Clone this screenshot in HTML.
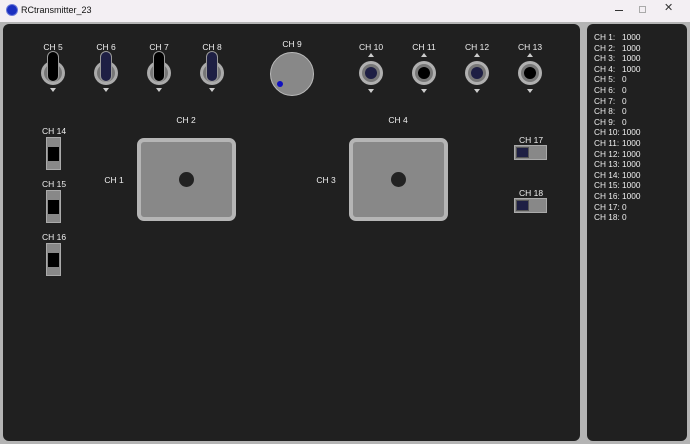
<!DOCTYPE html><html><head><style>
*{margin:0;padding:0;box-sizing:border-box}
body{width:690px;height:444px;background:#b4b4b4;position:relative;overflow:hidden;font-family:"Liberation Sans",sans-serif;color:#eee}
.a{position:absolute}
.t{position:absolute;font-size:8.5px;color:#eee;transform:translateX(-50%);white-space:nowrap}
.ring{position:absolute;border-radius:50%;background:#ababab}
.ring::after{content:"";position:absolute;left:3px;top:3px;right:3px;bottom:3px;border-radius:50%;background:#777}
.lev{position:absolute;width:12px;height:31px;border-radius:6px;border:1px solid #999;z-index:2}
.dn,.up{position:absolute;width:0;height:0;border-left:3px solid transparent;border-right:3px solid transparent;transform:translateX(-50%)}
.dn{border-top:4px solid #ccc}.up{border-bottom:4px solid #ccc}
.jack{position:absolute;width:24px;height:24px;border-radius:50%;background:#b0b0b0}
.jack i{position:absolute;left:3px;top:3px;width:18px;height:18px;border-radius:50%;background:#777}
.jack b{position:absolute;left:6px;top:6px;width:12px;height:12px;border-radius:50%}
.vs{position:absolute;width:15px;height:33px;background:#888;border:1px solid #aaa}
.vs i{position:absolute;left:1px;top:9px;width:11px;height:14px;background:#000}
.hs{position:absolute;width:33px;height:15px;background:#888;border:1px solid #aaa}
.hs i{position:absolute;left:1px;top:1px;width:13px;height:11px;background:#1e1f44;border:1px solid #555}
.pad{position:absolute;width:99px;height:83px;background:#888;border:4px solid #b5b5b5;border-radius:7px}
.pad i{position:absolute;left:38px;top:30px;width:15px;height:15px;border-radius:50%;background:#222}
.list{position:absolute;left:594px;top:32px;font-size:8.3px;line-height:10.6px;color:#eee}
.list span{display:inline-block;width:28px}
</style></head><body>
<div class="a" style="left:0;top:0;width:690px;height:22px;background:#f3eff3"></div>
<div class="a" style="left:6px;top:4px;width:12px;height:12px;border-radius:50%;background:#1a2fc0;border:1px solid #6a78d8"></div>
<div class="a" style="left:21px;top:5px;font-size:9px;color:#111">RCtransmitter_23</div>
<div class="a" style="left:615px;top:10px;width:8px;height:1px;background:#333"></div>
<div class="a" style="left:639px;top:6px;width:7px;height:7px;border:1px solid #aaa"></div>
<div class="a" style="left:664px;top:1px;font-size:11px;color:#333">✕</div>
<div class="a" style="left:3px;top:24px;width:577px;height:417px;background:#202020;border-radius:6px"></div>
<div class="a" style="left:587px;top:24px;width:100px;height:417px;background:#202020;border-radius:6px"></div>

<div class="t" style="left:53px;top:42px">CH 5</div><div class="t" style="left:106px;top:42px">CH 6</div><div class="t" style="left:159px;top:42px">CH 7</div><div class="t" style="left:212px;top:42px">CH 8</div>
<div class="ring" style="left:41px;top:61px;width:24px;height:24px"></div><div class="lev" style="left:47px;top:51px;background:#000"></div><div class="dn" style="left:53px;top:88px"></div>
<div class="ring" style="left:94px;top:61px;width:24px;height:24px"></div><div class="lev" style="left:100px;top:51px;background:#1e1f44"></div><div class="dn" style="left:106px;top:88px"></div>
<div class="ring" style="left:147px;top:61px;width:24px;height:24px"></div><div class="lev" style="left:153px;top:51px;background:#000"></div><div class="dn" style="left:159px;top:88px"></div>
<div class="ring" style="left:200px;top:61px;width:24px;height:24px"></div><div class="lev" style="left:206px;top:51px;background:#1e1f44"></div><div class="dn" style="left:212px;top:88px"></div>

<div class="t" style="left:292px;top:39px">CH 9</div>
<div class="a" style="left:270px;top:52px;width:44px;height:44px;border-radius:50%;background:#888;border:1px solid #bbb"></div>
<div class="a" style="left:277px;top:81px;width:6px;height:6px;border-radius:50%;background:#1010c0"></div>

<div class="t" style="left:371px;top:42px">CH 10</div><div class="up" style="left:371px;top:53px"></div><div class="jack" style="left:359px;top:61px"><i></i><b style="background:#1e1f44"></b></div><div class="dn" style="left:371px;top:89px"></div>
<div class="t" style="left:424px;top:42px">CH 11</div><div class="up" style="left:424px;top:53px"></div><div class="jack" style="left:412px;top:61px"><i></i><b style="background:#000"></b></div><div class="dn" style="left:424px;top:89px"></div>
<div class="t" style="left:477px;top:42px">CH 12</div><div class="up" style="left:477px;top:53px"></div><div class="jack" style="left:465px;top:61px"><i></i><b style="background:#1e1f44"></b></div><div class="dn" style="left:477px;top:89px"></div>
<div class="t" style="left:530px;top:42px">CH 13</div><div class="up" style="left:530px;top:53px"></div><div class="jack" style="left:518px;top:61px"><i></i><b style="background:#000"></b></div><div class="dn" style="left:530px;top:89px"></div>

<div class="t" style="left:54px;top:126px">CH 14</div><div class="vs" style="left:46px;top:137px"><i></i></div>
<div class="t" style="left:54px;top:179px">CH 15</div><div class="vs" style="left:46px;top:190px"><i></i></div>
<div class="t" style="left:54px;top:232px">CH 16</div><div class="vs" style="left:46px;top:243px"><i></i></div>

<div class="t" style="left:186px;top:115px">CH 2</div><div class="t" style="left:114px;top:175px">CH 1</div>
<div class="pad" style="left:137px;top:138px"><i></i></div>
<div class="t" style="left:398px;top:115px">CH 4</div><div class="t" style="left:326px;top:175px">CH 3</div>
<div class="pad" style="left:349px;top:138px"><i></i></div>

<div class="t" style="left:531px;top:135px">CH 17</div><div class="hs" style="left:514px;top:145px"><i></i></div>
<div class="t" style="left:531px;top:188px">CH 18</div><div class="hs" style="left:514px;top:198px"><i></i></div>

<div class="list">
<div><span>CH 1:</span>1000</div><div><span>CH 2:</span>1000</div><div><span>CH 3:</span>1000</div><div><span>CH 4:</span>1000</div>
<div><span>CH 5:</span>0</div><div><span>CH 6:</span>0</div><div><span>CH 7:</span>0</div><div><span>CH 8:</span>0</div><div><span>CH 9:</span>0</div>
<div><span>CH 10:</span>1000</div><div><span>CH 11:</span>1000</div><div><span>CH 12:</span>1000</div><div><span>CH 13:</span>1000</div><div><span>CH 14:</span>1000</div><div><span>CH 15:</span>1000</div><div><span>CH 16:</span>1000</div>
<div><span>CH 17:</span>0</div><div><span>CH 18:</span>0</div>
</div>
</body></html>
